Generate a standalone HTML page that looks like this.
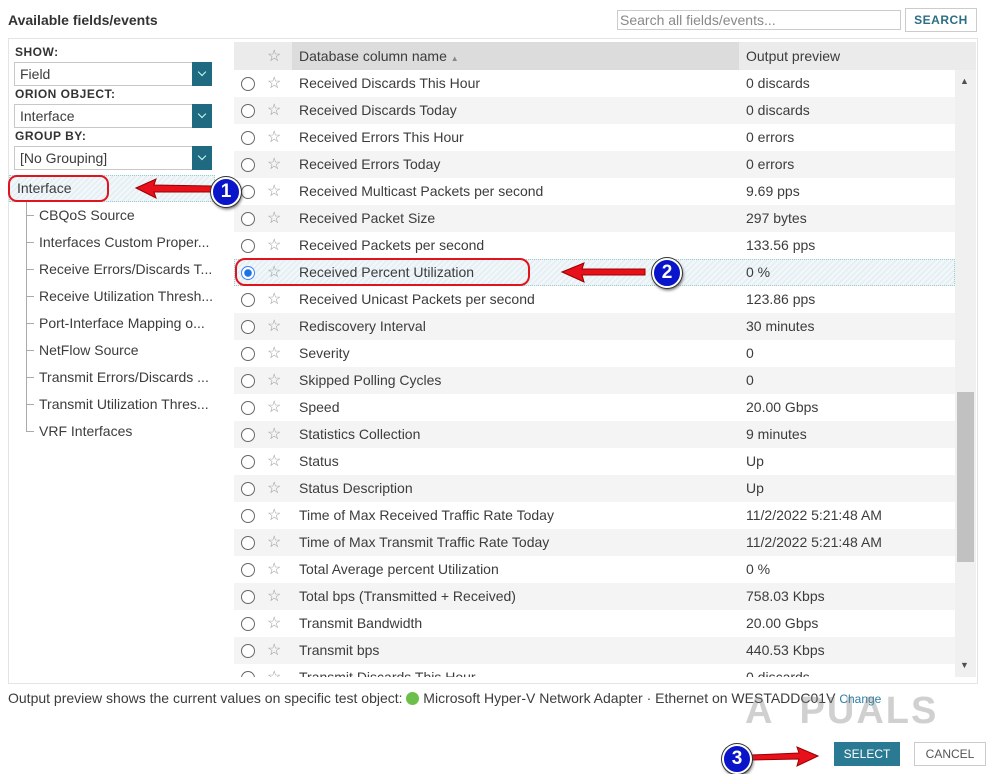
<!DOCTYPE html>
<html><head><meta charset="utf-8"><style>
*{box-sizing:border-box;margin:0;padding:0}
body{width:997px;height:772px;background:#fff;font-family:"Liberation Sans",sans-serif;color:#3c3c3c;position:relative;overflow:hidden;font-size:14px}
.a{position:absolute}
.lbl{font-size:12px;font-weight:bold;color:#333;letter-spacing:.5px}
.sel{border:1px solid #c8c8c8;background:#fff;height:24px;width:198px;padding:3px 5px;font-size:14px}
.sel b{position:absolute;right:-1px;top:-1px;width:20px;height:24px;background:#1f6a80}
.sel b:after{content:"";position:absolute;left:7px;top:7px;width:5px;height:5px;border-right:1.5px solid #cfe;border-bottom:1.5px solid #cfe;transform:rotate(45deg)}
.row{position:absolute;left:234px;width:721px;height:27px;line-height:27px}
.row.g{background:#f4f4f4}
.rad{position:absolute;left:7px;top:7px;width:14px;height:14px;border:1px solid #666;border-radius:50%;background:#fff}
.st{position:absolute;left:33px;top:0;color:#999;font-size:16px}
.nm{position:absolute;left:65px}
.op{position:absolute;left:512px}
.tr{position:absolute;left:39px;height:27px;line-height:27px;font-size:14px}
.tl{position:absolute;left:26px;width:8px;border-left:1px solid #aaa;border-bottom:1px solid #aaa}
.circ{position:absolute;width:30px;height:30px;border-radius:50%;background:#0a14c8;border:2px solid #fff;box-shadow:0 0 0 1px #333,1px 2px 3px #555;color:#fff;font-weight:bold;font-size:19px;text-align:center;line-height:26px}
</style></head><body>
<div class="a" style="left:8px;top:12px;font-weight:bold;font-size:14px;color:#333">Available fields/events</div>
<div class="a" style="left:617px;top:10px;width:284px;height:20px;border:1px solid #ccc;font-size:14px;color:#888;padding-left:2px;line-height:18px">Search all fields/events...</div>
<div class="a" style="left:905px;top:8px;width:72px;height:24px;border:1px solid #ccc;font-size:12px;font-weight:bold;color:#2a6f86;text-align:center;line-height:22px;letter-spacing:.5px">SEARCH</div>
<div class="a" style="left:8px;top:38px;width:970px;height:646px;border:1px solid #e4e4e4"></div>

<div class="a lbl" style="left:15px;top:45px">SHOW:</div>
<div class="a sel" style="left:14px;top:62px">Field<b></b></div>
<div class="a lbl" style="left:15px;top:87px">ORION OBJECT:</div>
<div class="a sel" style="left:14px;top:104px">Interface<b></b></div>
<div class="a lbl" style="left:15px;top:129px">GROUP BY:</div>
<div class="a sel" style="left:14px;top:146px">[No Grouping]<b></b></div>

<div class="a" style="left:9px;top:175px;width:206px;height:27px;background:repeating-linear-gradient(135deg,#e6f0f4 0 2px,#f2f7f9 2px 4px);border:1px dotted #9cc"></div>
<div class="a" style="left:17px;top:176px;height:25px;line-height:25px">Interface</div>
<div class="a" style="left:8px;top:175px;width:101px;height:27px;border:2px solid #e0141e;border-radius:9px"></div>

<div class="tl" style="top:202px;height:14px"></div><div class="tr" style="top:202px">CBQoS Source</div>
<div class="tl" style="top:216px;height:27px"></div><div class="tr" style="top:229px">Interfaces Custom Proper...</div>
<div class="tl" style="top:243px;height:27px"></div><div class="tr" style="top:256px">Receive Errors/Discards T...</div>
<div class="tl" style="top:270px;height:27px"></div><div class="tr" style="top:283px">Receive Utilization Thresh...</div>
<div class="tl" style="top:297px;height:27px"></div><div class="tr" style="top:310px">Port-Interface Mapping o...</div>
<div class="tl" style="top:324px;height:27px"></div><div class="tr" style="top:337px">NetFlow Source</div>
<div class="tl" style="top:351px;height:27px"></div><div class="tr" style="top:364px">Transmit Errors/Discards ...</div>
<div class="tl" style="top:378px;height:27px"></div><div class="tr" style="top:391px">Transmit Utilization Thres...</div>
<div class="tl" style="top:405px;height:27px"></div><div class="tr" style="top:418px">VRF Interfaces</div>

<div class="a" style="left:234px;top:42px;width:742px;height:28px;background:#ebebeb"></div>
<div class="a" style="left:292px;top:42px;width:447px;height:28px;background:#dcdcdc"></div>
<div class="a" style="left:267px;top:46px;color:#999;font-size:16px">&#9734;</div>
<div class="a" style="left:299px;top:42px;line-height:28px">Database column name <span style="font-size:8px;color:#888">&#9650;</span></div>
<div class="a" style="left:746px;top:42px;line-height:28px">Output preview</div>

<div class="a" style="left:234px;top:70px;width:721px;height:607px;overflow:hidden">
<div style="position:relative;left:-234px;top:-70px">
<div class="row" style="top:70px"><div class="rad"></div><div class="st">&#9734;</div><div class="nm">Received Discards This Hour</div><div class="op">0 discards</div></div>
<div class="row g" style="top:97px"><div class="rad"></div><div class="st">&#9734;</div><div class="nm">Received Discards Today</div><div class="op">0 discards</div></div>
<div class="row" style="top:124px"><div class="rad"></div><div class="st">&#9734;</div><div class="nm">Received Errors This Hour</div><div class="op">0 errors</div></div>
<div class="row g" style="top:151px"><div class="rad"></div><div class="st">&#9734;</div><div class="nm">Received Errors Today</div><div class="op">0 errors</div></div>
<div class="row" style="top:178px"><div class="rad"></div><div class="st">&#9734;</div><div class="nm">Received Multicast Packets per second</div><div class="op">9.69 pps</div></div>
<div class="row g" style="top:205px"><div class="rad"></div><div class="st">&#9734;</div><div class="nm">Received Packet Size</div><div class="op">297 bytes</div></div>
<div class="row" style="top:232px"><div class="rad"></div><div class="st">&#9734;</div><div class="nm">Received Packets per second</div><div class="op">133.56 pps</div></div>
<div class="row" style="top:259px;background:repeating-linear-gradient(135deg,#e6f0f4 0 2px,#f2f7f9 2px 4px);outline:1px dotted #9cc;outline-offset:-1px"><div class="rad" style="border-color:#3b82f6;background:radial-gradient(circle,#1a73e8 0 3.5px,#fff 4px)"></div><div class="st">&#9734;</div><div class="nm">Received Percent Utilization</div><div class="op">0 %</div></div>
<div class="row" style="top:286px"><div class="rad"></div><div class="st">&#9734;</div><div class="nm">Received Unicast Packets per second</div><div class="op">123.86 pps</div></div>
<div class="row g" style="top:313px"><div class="rad"></div><div class="st">&#9734;</div><div class="nm">Rediscovery Interval</div><div class="op">30 minutes</div></div>
<div class="row" style="top:340px"><div class="rad"></div><div class="st">&#9734;</div><div class="nm">Severity</div><div class="op">0</div></div>
<div class="row g" style="top:367px"><div class="rad"></div><div class="st">&#9734;</div><div class="nm">Skipped Polling Cycles</div><div class="op">0</div></div>
<div class="row" style="top:394px"><div class="rad"></div><div class="st">&#9734;</div><div class="nm">Speed</div><div class="op">20.00 Gbps</div></div>
<div class="row g" style="top:421px"><div class="rad"></div><div class="st">&#9734;</div><div class="nm">Statistics Collection</div><div class="op">9 minutes</div></div>
<div class="row" style="top:448px"><div class="rad"></div><div class="st">&#9734;</div><div class="nm">Status</div><div class="op">Up</div></div>
<div class="row g" style="top:475px"><div class="rad"></div><div class="st">&#9734;</div><div class="nm">Status Description</div><div class="op">Up</div></div>
<div class="row" style="top:502px"><div class="rad"></div><div class="st">&#9734;</div><div class="nm">Time of Max Received Traffic Rate Today</div><div class="op">11/2/2022 5:21:48 AM</div></div>
<div class="row g" style="top:529px"><div class="rad"></div><div class="st">&#9734;</div><div class="nm">Time of Max Transmit Traffic Rate Today</div><div class="op">11/2/2022 5:21:48 AM</div></div>
<div class="row" style="top:556px"><div class="rad"></div><div class="st">&#9734;</div><div class="nm">Total Average percent Utilization</div><div class="op">0 %</div></div>
<div class="row g" style="top:583px"><div class="rad"></div><div class="st">&#9734;</div><div class="nm">Total bps (Transmitted + Received)</div><div class="op">758.03 Kbps</div></div>
<div class="row" style="top:610px"><div class="rad"></div><div class="st">&#9734;</div><div class="nm">Transmit Bandwidth</div><div class="op">20.00 Gbps</div></div>
<div class="row g" style="top:637px"><div class="rad"></div><div class="st">&#9734;</div><div class="nm">Transmit bps</div><div class="op">440.53 Kbps</div></div>
<div class="row" style="top:664px"><div class="rad"></div><div class="st">&#9734;</div><div class="nm">Transmit Discards This Hour</div><div class="op">0 discards</div></div>
</div></div>

<div class="a" style="left:955px;top:70px;width:21px;height:607px;background:#f0f0f0"></div>
<div class="a" style="left:957px;top:392px;width:17px;height:170px;background:#c1c1c1"></div>
<div class="a" style="left:960px;top:76px;font-size:9px;color:#505050">&#9650;</div>
<div class="a" style="left:960px;top:660px;font-size:9px;color:#505050">&#9660;</div>

<div class="a" style="left:8px;top:690px;font-size:14px">Output preview shows the current values on specific test object: <span style="display:inline-block;width:13px;height:13px;border-radius:50%;background:#6cbf4a;vertical-align:-2px"></span> Microsoft Hyper-V Network Adapter · Ethernet on WESTADDC01V <span style="font-size:12px;color:#2a7fa6">Change</span></div>
<div class="a" style="left:745px;top:690px;font-size:38px;font-weight:bold;color:rgba(120,120,120,.35);letter-spacing:2px">A&nbsp;&nbsp;PUALS</div>

<div class="a" style="left:834px;top:742px;width:66px;height:24px;background:#297a92;color:#fff;font-size:12px;text-align:center;line-height:24px">SELECT</div>
<div class="a" style="left:914px;top:742px;width:72px;height:24px;border:1px solid #ccc;color:#555;font-size:12px;text-align:center;line-height:22px">CANCEL</div>

<svg class="a" style="left:0;top:0" width="997" height="772">
<g fill="#e8101a" stroke="#900" stroke-width="1">
<path d="M136 188 L156 179 L154 185 L212 186 L212 192 L154 192 L156 198 Z"/>
<path d="M562 272 L584 263 L582 269 L645 269 L645 275 L582 275 L584 282 Z"/>
<path d="M818 756 L797 747 L799 753 L752 755 L752 760 L799 759 L797 766 Z"/>
</g>
<rect x="236" y="259" width="293" height="26" rx="9" fill="none" stroke="#e0141e" stroke-width="2"/>
</svg>
<div class="circ" style="left:211px;top:177px">1</div>
<div class="circ" style="left:652px;top:258px">2</div>
<div class="circ" style="left:722px;top:744px">3</div>
</body></html>
